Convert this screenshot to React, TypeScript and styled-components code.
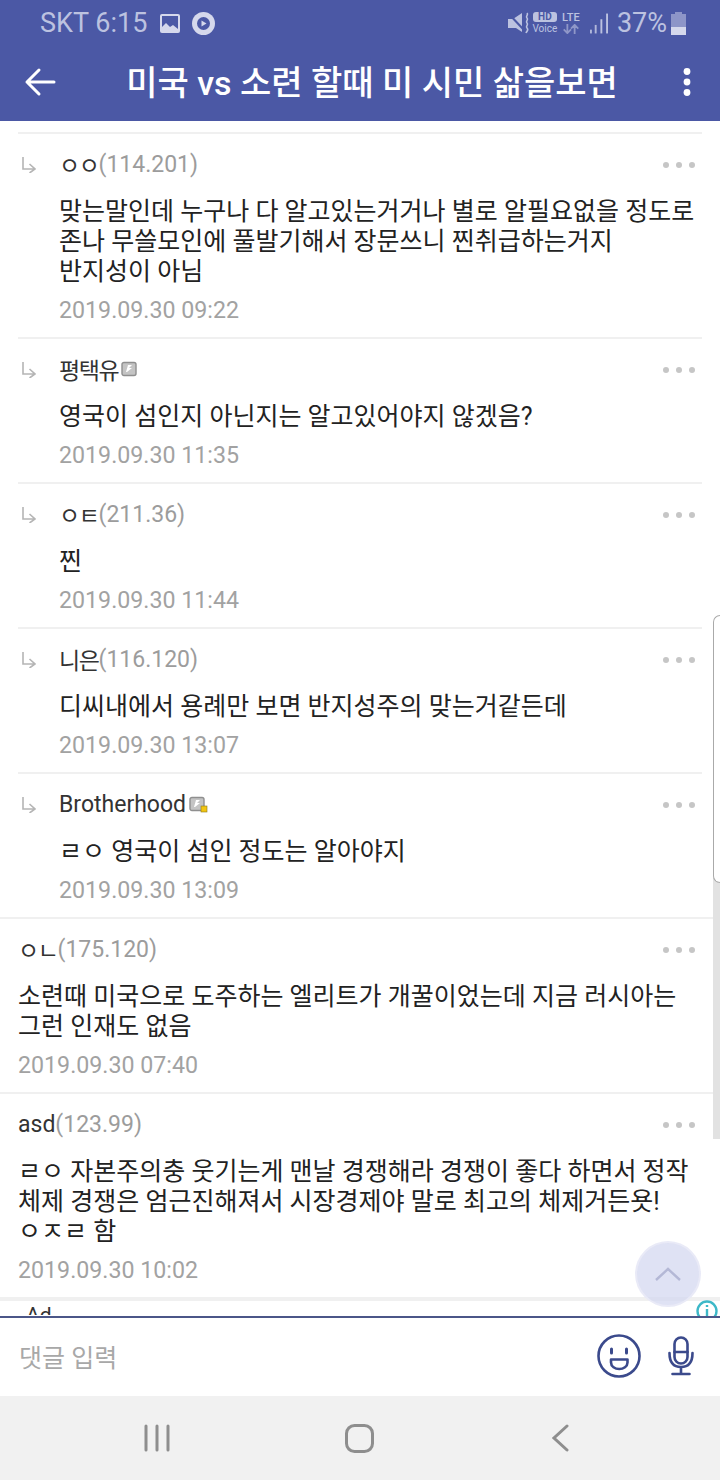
import styled, { createGlobalStyle } from "styled-components";

const GlobalStyle = createGlobalStyle`
  html, body {
    margin: 0;
    padding: 0;
    background: #fff;
  }
  * {
    box-sizing: border-box;
  }
`

const Page = styled.div`
  position: relative;
  width: 720px;
  height: 1480px;
  display: flex;
  flex-direction: column;
  overflow: hidden;
  background: #fff;
  font-family: Roboto, "Noto Sans CJK KR", sans-serif;
`

const Header = styled.header`
  height: 121px;
  flex-shrink: 0;
  background: #4b58a5;
  display: flex;
  flex-direction: column;
`

const StatusBar = styled.div`
  height: 46px;
  padding: 0 34px 0 40px;
  display: flex;
  align-items: center;
  justify-content: space-between;
  color: #bcc2e0;
  font-size: 27px;
`

const StatusGroup = styled.div`
  display: flex;
  align-items: center;
`

const StatusText = styled.span<{ $gap?: number }>`
  margin-right: ${p => p.$gap ?? 0}px;
  white-space: nowrap;
`

const HdVoice = styled.div`
  width: 26px;
  margin: 0 2px;
  display: flex;
  flex-direction: column;
  align-items: center;
`

const HdBadge = styled.span`
  width: 24px;
  height: 10px;
  border-radius: 3px;
  background: #bcc2e0;
  color: #4b58a5;
  font-size: 10px;
  font-weight: 700;
  line-height: 10px;
  text-align: center;
`

const TinyLabel = styled.span`
  margin-top: 1px;
  font-size: 10px;
  line-height: 11px;
`

const LteBlock = styled.div`
  width: 22px;
  margin-right: 8px;
  display: flex;
  flex-direction: column;
  align-items: center;
`

const LteLabel = styled.span`
  font-size: 11px;
  font-weight: 500;
  line-height: 12px;
`

const Toolbar = styled.div`
  flex: 1;
  padding: 0 28px 4px 24px;
  display: flex;
  align-items: center;
  justify-content: space-between;
`

const Title = styled.h1`
  margin: 2px 0 0 6px;
  color: #fff;
  font-size: 34px;
  font-weight: 500;
  line-height: 40px;
  white-space: nowrap;
`

const CommentList = styled.main`
  flex: 1;
  min-height: 0;
  padding-top: 11px;
  overflow: hidden;
`

const Row = styled.article<{ $reply?: boolean }>`
  margin: ${p => (p.$reply ? "0 18px" : "0")};
  padding: 15px ${p => (p.$reply ? "7px" : "25px")} 12px ${p => (p.$reply ? "0" : "18px")};
  border-top: 2px solid #f0f0f0;
  display: flex;
`

const ReplyMark = styled.div`
  width: 41px;
  height: 30px;
  flex-shrink: 0;
  padding: 8px 0 0 4px;
`

const RowBody = styled.div`
  flex: 1;
  min-width: 0;
`

const RowHead = styled.div`
  height: 30px;
  display: flex;
  align-items: center;
  justify-content: space-between;
`

const Author = styled.div`
  display: flex;
  align-items: center;
  color: #333;
  font-size: 23px;
`

const AuthorName = styled.span<{ $hangul: boolean }>`
  letter-spacing: ${p => (p.$hangul ? "-1.4px" : "0")};
`

const Ip = styled.span`
  color: #9c9c9c;
`

const MoreDots = styled.div`
  margin-top: 2px;
  display: flex;
  gap: 7px;
`

const Dot = styled.i`
  width: 6px;
  height: 6px;
  border-radius: 50%;
  background: #c6c6c6;
`

const Body = styled.p`
  margin: 18px 0 8px;
  color: #222;
  font-size: 25px;
  line-height: 30px;
  white-space: pre;
`

const Stamp = styled.div`
  color: #a2a2a2;
  font-size: 23.2px;
  line-height: 30px;
`

const AdRow = styled.div`
  height: 18px;
  border-top: 4px solid #f0f0f0;
  padding-left: 26px;
  overflow: hidden;
  color: #333;
  font-size: 21px;
  line-height: 28px;
`

const Composer = styled.div`
  height: 80px;
  flex-shrink: 0;
  border-top: 2px solid #4b5688;
  padding: 0 26px 2px 19px;
  display: flex;
  align-items: center;
  background: #fff;
`

const Placeholder = styled.span`
  flex: 1;
  color: #a8a8a8;
  font-size: 25px;
`

const ComposerIcons = styled.div`
  display: flex;
  align-items: center;
  gap: 27px;
`

const NavBar = styled.nav`
  height: 84px;
  flex-shrink: 0;
  padding: 0 151px 0 144px;
  background: #f1f1f1;
  display: flex;
  align-items: center;
  justify-content: space-between;
`

const HomeSlot = styled.div`
  margin-right: 4px;
  display: flex;
`

const ScrollTrack = styled.div`
  position: absolute;
  top: 875px;
  right: 0;
  width: 7px;
  height: 264px;
  background: #e2e2e2;
`

const ScrollThumb = styled.div`
  position: absolute;
  top: 615px;
  right: 0;
  width: 7px;
  height: 268px;
  border: 1px solid #aaa;
  border-right: none;
  border-radius: 8px 0 0 8px;
  background: #fff;
`

const TopButton = styled.button`
  position: absolute;
  top: 1241px;
  left: 635px;
  width: 66px;
  height: 66px;
  padding: 0;
  border: 2px solid rgba(236, 236, 248, 0.8);
  border-radius: 50%;
  background: rgba(210, 214, 240, 0.7);
  display: flex;
  align-items: center;
  justify-content: center;
`

const InfoBadge = styled.div`
  position: absolute;
  top: 1300px;
  left: 696px;
  width: 22px;
  height: 16px;
  overflow: hidden;
`

const comments = [
  {
    reply: true,
    name: "ㅇㅇ",
    ip: "(114.201)",
    text: "맞는말인데 누구나 다 알고있는거거나 별로 알필요없을 정도로\n존나 무쓸모인에 풀발기해서 장문쓰니 찐취급하는거지\n반지성이 아님",
    date: "2019.09.30 09:22",
  },
  { reply: true, name: "평택유", badge: "plain", text: "영국이 섬인지 아닌지는 알고있어야지 않겠음?", date: "2019.09.30 11:35" },
  { reply: true, name: "ㅇㅌ", ip: "(211.36)", text: "찐", date: "2019.09.30 11:44" },
  { reply: true, name: "니은", ip: "(116.120)", text: "디씨내에서 용례만 보면 반지성주의 맞는거같든데", date: "2019.09.30 13:07" },
  { reply: true, name: "Brotherhood", badge: "gold", text: "ㄹㅇ 영국이 섬인 정도는 알아야지", date: "2019.09.30 13:09" },
  {
    name: "ㅇㄴ",
    ip: "(175.120)",
    text: "소련때 미국으로 도주하는 엘리트가 개꿀이었는데 지금 러시아는\n그런 인재도 없음",
    date: "2019.09.30 07:40",
  },
  {
    name: "asd",
    ip: "(123.99)",
    text: "ㄹㅇ 자본주의충 웃기는게 맨날 경쟁해라 경쟁이 좋다 하면서 정작\n체제 경쟁은 엄근진해져서 시장경제야 말로 최고의 체제거든욧!\nㅇㅈㄹ 함",
    date: "2019.09.30 10:02",
  },
]

const BackArrow = () => (
  <svg width="32" height="32" viewBox="0 0 32 32" fill="none" stroke="#fff" strokeWidth="3" strokeLinecap="round" strokeLinejoin="round">
    <path d="M3 16h27M15 4 3 16l12 12" />
  </svg>
)

const Kebab = () => (
  <svg width="10" height="28" viewBox="0 0 10 28" fill="#fff">
    <circle cx="5" cy="3.500" r="3.400" />
    <circle cx="5" cy="14" r="3.400" />
    <circle cx="5" cy="24.500" r="3.400" />
  </svg>
)

const PictureIcon = () => (
  <svg width="22" height="21" viewBox="0 0 22 21" style={{ marginRight: 11 }}>
    <rect x="1" y="1" width="20" height="19" rx="2" fill="#d5d8ec" />
    <rect x="3" y="3" width="16" height="15" fill="#4b58a5" />
    <path d="M3 18v-4l4-4 4 4 3-2 5 4v2z" fill="#d5d8ec" />
  </svg>
)

const PlayIcon = () => (
  <svg width="23" height="23" viewBox="0 0 23 23">
    <circle cx="11.500" cy="11.500" r="11.500" fill="#d5d8ec" />
    <circle cx="11.500" cy="11.500" r="6.500" fill="#4b58a5" />
    <path d="m9.500 8.500 5 3-5 3z" fill="#d5d8ec" />
  </svg>
)

const MuteIcon = () => (
  <svg width="22" height="22" viewBox="0 0 22 22" fill="#bcc2e0">
    <path d="M0 7h5l9-6v19L8 16H0z" />
    <path d="M0 1 15 17" stroke="#4b58a5" strokeWidth="2" />
    <path d="M19 1c2 2-2 3 0 5s-2 3 0 5-2 3 0 5 0 3-1 5" fill="none" stroke="#bcc2e0" strokeWidth="1.600" />
  </svg>
)

const LteArrows = () => (
  <svg width="18" height="10" viewBox="0 0 18 11" fill="none" stroke="#8f97c8" strokeWidth="2">
    <path d="M5 0v9M1 6l4 4 4-4M13 11V2M9 5l4-4 4 4" />
  </svg>
)

const SignalBars = () => (
  <svg width="18" height="21" viewBox="0 0 19 21" fill="#bcc2e0" style={{ marginRight: 9 }}>
    <rect x="0" y="17" width="2" height="4" opacity="0.9" />
    <rect x="5" y="12" width="2" height="9" opacity="0.9" />
    <rect x="11" y="6" width="2" height="15" />
    <rect x="17" y="0" width="2" height="21" />
  </svg>
)

const BatteryIcon = () => (
  <svg width="15" height="23" viewBox="0 0 15 23" style={{ marginLeft: 4 }}>
    <path d="M4 0h7v2h4v21H0V2h4z" fill="#8d95c8" />
    <rect y="15" width="15" height="8" fill="#d5d8ec" />
  </svg>
)

const ReplyArrow = () => (
  <svg width="14" height="16" viewBox="0 0 14 16" fill="none" stroke="#b5b5b5" strokeWidth="1.600">
    <path d="M1 0v12h12M7.500 7l5.500 5-5.500 4" />
  </svg>
)

const LevelBadge = ({ gold }: { gold: boolean }) => (
  <svg width="20" height="17" viewBox="0 0 20 17" style={{ marginLeft: 3 }}>
    <rect x="1" y="1.500" width="14" height="13" rx="2" fill="#c4c4c4" stroke="#8f8f8f" strokeWidth="1.400" />
    <path d="m5 11 2-7h4l-3 3h3l-5 4z" fill="#fff" />
    {gold && <rect x="12" y="10" width="6" height="6" fill="#f2c511" stroke="#8a7a20" strokeWidth="0.600" />}
  </svg>
)

const SmileIcon = () => (
  <svg width="44" height="44" viewBox="0 0 44 44" fill="none" stroke="#3b4a8c" strokeWidth="2.600">
    <circle cx="22" cy="22" r="20.500" />
    <path d="M14.500 15v4M29.500 15v4" strokeLinecap="round" strokeWidth="3" />
    <path d="M14 25.500h16.500v3c0 4-4 6.500-8.250 6.500S14 32.500 14 28.500z" strokeLinejoin="round" />
  </svg>
)

const MicIcon = () => (
  <svg width="26" height="40" viewBox="0 0 26 40" fill="none" stroke="#3b4a8c" strokeWidth="2.600" strokeLinecap="round">
    <rect x="6.500" y="1.500" width="13" height="26" rx="6.500" />
    <path d="M6.500 16h13M1.500 17c0 9 4 14 11.500 14s11.500-5 11.500-14M13 31v6.500M4.500 38h17" />
  </svg>
)

const ChevronUp = () => (
  <svg width="28" height="16" viewBox="0 0 28 16" fill="none" stroke="#b4b8d6" strokeWidth="2.400">
    <path d="M2 14 14 3l12 11" />
  </svg>
)

const InfoIcon = () => (
  <svg width="22" height="22" viewBox="0 0 22 22" fill="none" stroke="#3db8c8" strokeWidth="2.400">
    <circle cx="11" cy="11" r="9.500" fill="#fff" />
    <path d="M11 9v7M11 5v2" />
  </svg>
)

const NavRecents = () => (
  <svg width="26" height="28" viewBox="0 0 26 28" stroke="#8e8e8e" strokeWidth="3" strokeLinecap="round">
    <path d="M2 2v24M13 2v24M24 2v24" />
  </svg>
)

const NavHome = () => (
  <svg width="29" height="29" viewBox="0 0 29 29" fill="none" stroke="#8e8e8e" strokeWidth="3">
    <rect x="1.500" y="1.500" width="26" height="26" rx="8" />
  </svg>
)

const NavBack = () => (
  <svg width="17" height="28" viewBox="0 0 17 28" fill="none" stroke="#8e8e8e" strokeWidth="3" strokeLinecap="round">
    <path d="M15 2 2 14l13 12" />
  </svg>
)

const App = () => {
  return (
    <Page>
      <GlobalStyle />
      <Header>
        <StatusBar>
          <StatusGroup>
            <StatusText $gap={12}>SKT 6:15</StatusText>
            <PictureIcon />
            <PlayIcon />
          </StatusGroup>
          <StatusGroup>
            <MuteIcon />
            <HdVoice>
              <HdBadge>HD</HdBadge>
              <TinyLabel>Voice</TinyLabel>
            </HdVoice>
            <LteBlock>
              <LteLabel>LTE</LteLabel>
              <LteArrows />
            </LteBlock>
            <SignalBars />
            <StatusText>37%</StatusText>
            <BatteryIcon />
          </StatusGroup>
        </StatusBar>
        <Toolbar>
          <BackArrow />
          <Title>미국 vs 소련 할때 미 시민 삶을보면</Title>
          <Kebab />
        </Toolbar>
      </Header>
      <CommentList>
        {comments.map(c => (
          <Row key={c.date} $reply={c.reply}>
            {c.reply && (
              <ReplyMark>
                <ReplyArrow />
              </ReplyMark>
            )}
            <RowBody>
              <RowHead>
                <Author>
                  <AuthorName $hangul={/^[ㄱ-힣]/.test(c.name)}>{c.name}</AuthorName>
                  {c.ip && <Ip>{c.ip}</Ip>}
                  {c.badge && <LevelBadge gold={c.badge === "gold"} />}
                </Author>
                <MoreDots>
                  <Dot />
                  <Dot />
                  <Dot />
                </MoreDots>
              </RowHead>
              <Body>{c.text}</Body>
              <Stamp>{c.date}</Stamp>
            </RowBody>
          </Row>
        ))}
        <AdRow>Ad</AdRow>
      </CommentList>
      <Composer>
        <Placeholder>댓글 입력</Placeholder>
        <ComposerIcons>
          <SmileIcon />
          <MicIcon />
        </ComposerIcons>
      </Composer>
      <NavBar>
        <NavRecents />
        <HomeSlot>
          <NavHome />
        </HomeSlot>
        <NavBack />
      </NavBar>
      <ScrollTrack />
      <ScrollThumb />
      <TopButton aria-label="top">
        <ChevronUp />
      </TopButton>
      <InfoBadge>
        <InfoIcon />
      </InfoBadge>
    </Page>
  );
}

export default App;
